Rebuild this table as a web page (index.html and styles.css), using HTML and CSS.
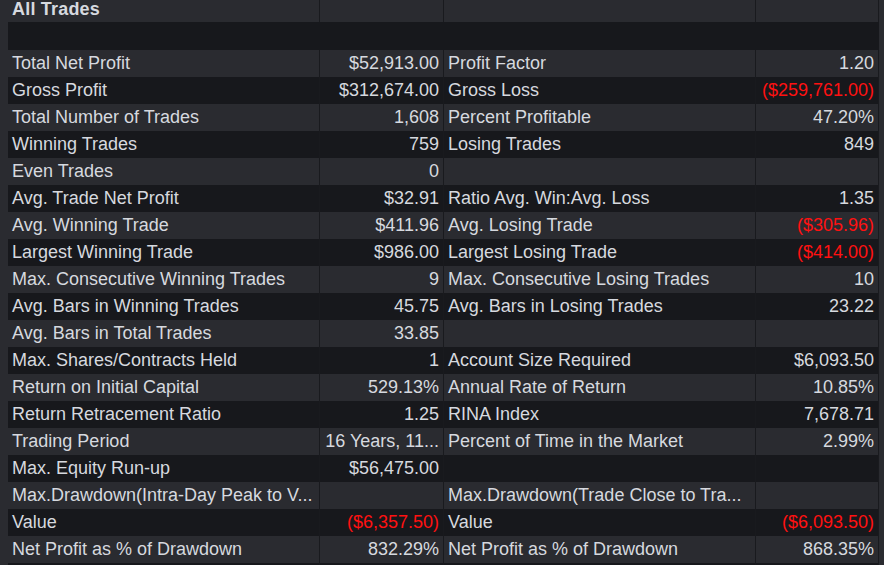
FILE: index.html
```html
<!DOCTYPE html>
<html>
<head>
<meta charset="utf-8">
<link rel="stylesheet" href="styles.css">
<title>All Trades</title>
</head>
<body>
<div class="report">
  <div class="row head"><div class="cell label title">All Trades</div><div class="cell"></div><div class="cell"></div><div class="cell"></div></div>
  <div class="row blank"><div class="cell"></div><div class="cell"></div><div class="cell"></div><div class="cell"></div></div>
  <div class="data">
    <div class="row"><div class="cell label">Total Net Profit</div><div class="cell val">$52,913.00</div><div class="cell label">Profit Factor</div><div class="cell val">1.20</div></div>
    <div class="row"><div class="cell label">Gross Profit</div><div class="cell val">$312,674.00</div><div class="cell label">Gross Loss</div><div class="cell val neg">($259,761.00)</div></div>
    <div class="row"><div class="cell label">Total Number of Trades</div><div class="cell val">1,608</div><div class="cell label">Percent Profitable</div><div class="cell val">47.20%</div></div>
    <div class="row"><div class="cell label">Winning Trades</div><div class="cell val">759</div><div class="cell label">Losing Trades</div><div class="cell val">849</div></div>
    <div class="row"><div class="cell label">Even Trades</div><div class="cell val">0</div><div class="cell label"></div><div class="cell val"></div></div>
    <div class="row"><div class="cell label">Avg. Trade Net Profit</div><div class="cell val">$32.91</div><div class="cell label">Ratio Avg. Win:Avg. Loss</div><div class="cell val">1.35</div></div>
    <div class="row"><div class="cell label">Avg. Winning Trade</div><div class="cell val">$411.96</div><div class="cell label">Avg. Losing Trade</div><div class="cell val neg">($305.96)</div></div>
    <div class="row"><div class="cell label">Largest Winning Trade</div><div class="cell val">$986.00</div><div class="cell label">Largest Losing Trade</div><div class="cell val neg">($414.00)</div></div>
    <div class="row"><div class="cell label">Max. Consecutive Winning Trades</div><div class="cell val">9</div><div class="cell label">Max. Consecutive Losing Trades</div><div class="cell val">10</div></div>
    <div class="row"><div class="cell label">Avg. Bars in Winning Trades</div><div class="cell val">45.75</div><div class="cell label">Avg. Bars in Losing Trades</div><div class="cell val">23.22</div></div>
    <div class="row"><div class="cell label">Avg. Bars in Total Trades</div><div class="cell val">33.85</div><div class="cell label"></div><div class="cell val"></div></div>
    <div class="row"><div class="cell label">Max. Shares/Contracts Held</div><div class="cell val">1</div><div class="cell label">Account Size Required</div><div class="cell val">$6,093.50</div></div>
    <div class="row"><div class="cell label">Return on Initial Capital</div><div class="cell val">529.13%</div><div class="cell label">Annual Rate of Return</div><div class="cell val">10.85%</div></div>
    <div class="row"><div class="cell label">Return Retracement Ratio</div><div class="cell val">1.25</div><div class="cell label">RINA Index</div><div class="cell val">7,678.71</div></div>
    <div class="row"><div class="cell label">Trading Period</div><div class="cell val">16 Years, 11...</div><div class="cell label">Percent of Time in the Market</div><div class="cell val">2.99%</div></div>
    <div class="row"><div class="cell label">Max. Equity Run-up</div><div class="cell val">$56,475.00</div><div class="cell label"></div><div class="cell val"></div></div>
    <div class="row"><div class="cell label">Max.Drawdown(Intra-Day Peak to V...</div><div class="cell val"></div><div class="cell label">Max.Drawdown(Trade Close to Tra...</div><div class="cell val"></div></div>
    <div class="row"><div class="cell label">Value</div><div class="cell val neg">($6,357.50)</div><div class="cell label">Value</div><div class="cell val neg">($6,093.50)</div></div>
    <div class="row"><div class="cell label">Net Profit as % of Drawdown</div><div class="cell val">832.29%</div><div class="cell label">Net Profit as % of Drawdown</div><div class="cell val">868.35%</div></div>
    <div class="row"><div class="cell label"></div><div class="cell val"></div><div class="cell label"></div><div class="cell val"></div></div>
  </div>
</div>
</body>
</html>
```
FILE: styles.css
```css
html, body {
  margin: 0;
  padding: 0;
  height: 100%;
  overflow: hidden;
}
body {
  background: #2a2b30;
  font-family: "Liberation Sans", Arial, sans-serif;
  font-size: 18px;
  color: #d6d9df;
}
.report {
  margin-left: 8px;
  width: 871px;
  display: flex;
  flex-direction: column;
}
.row {
  display: grid;
  grid-template-columns: 312px 124px 312px 123px;
  height: 27px;
  line-height: 27px;
  background: #2a2b30;
}
.data .row:nth-child(even) {
  background: #17181c;
}
.cell {
  border-right: 1px solid #191a1e;
  white-space: nowrap;
  overflow: hidden;
  text-overflow: clip;
}
.label {
  padding-left: 4px;
}
.val {
  text-align: right;
  padding-right: 4px;
}
.neg {
  color: #ff1111;
}
.row.head {
  height: 22px;
  line-height: 18px;
}
.title {
  font-weight: bold;
  letter-spacing: 0.2px;
}
.row.blank {
  height: 28px;
  background: #17181c;
}
.row.blank .cell {
  border-right-color: #17181c;
}
```
